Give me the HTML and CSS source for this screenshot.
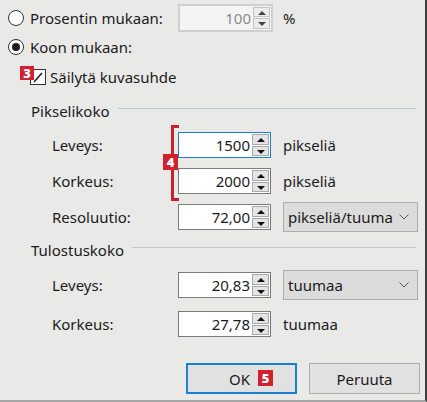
FILE: index.html
```html
<!DOCTYPE html>
<html>
<head>
<meta charset="utf-8">
<link rel="stylesheet" href="styles.css">
</head>
<body>
<div class="dialog">
  <div class="row row-top">
    <label class="opt">
      <span class="radio"></span>
      <span>Prosentin mukaan:</span>
    </label>
    <div class="spin disabled"><span class="val">100</span><span class="arrows"><span class="up"></span><span class="down"></span></span></div>
    <span class="unit">%</span>
  </div>
  <div class="row row-size">
    <label class="opt">
      <span class="radio checked"></span>
      <span>Koon mukaan:</span>
    </label>
  </div>
  <div class="row row-check">
    <span class="check-wrap">
      <span class="badge b3">3</span>
      <span class="check"><svg width="12" height="12" viewBox="0 0 12 12"><path d="M2 11 L10 2" stroke="#222" stroke-width="1.6" fill="none"/></svg></span>
    </span>
    <span>Säilytä kuvasuhde</span>
  </div>

  <div class="group">
    <div class="legend"><span>Pikselikoko</span><span class="rule"></span></div>
    <div class="fields">
      <div class="bracket"></div>
      <span class="badge b4">4</span>
      <div class="row field">
        <span class="lbl">Leveys:</span>
        <div class="spin focus"><span class="val">1500</span><span class="arrows"><span class="up"></span><span class="down"></span></span></div>
        <span class="unit">pikseliä</span>
      </div>
      <div class="row field">
        <span class="lbl">Korkeus:</span>
        <div class="spin"><span class="val">2000</span><span class="arrows"><span class="up"></span><span class="down"></span></span></div>
        <span class="unit">pikseliä</span>
      </div>
      <div class="row field">
        <span class="lbl">Resoluutio:</span>
        <div class="spin"><span class="val">72,00</span><span class="arrows"><span class="up"></span><span class="down"></span></span></div>
        <div class="select"><span>pikseliä/tuuma</span><svg width="10" height="6" viewBox="0 0 10 6"><path d="M0.5 0.5 L5 5 L9.5 0.5" stroke="#555" fill="none"/></svg></div>
      </div>
    </div>
  </div>

  <div class="group group2">
    <div class="legend"><span>Tulostuskoko</span><span class="rule"></span></div>
    <div class="row field f2">
      <span class="lbl">Leveys:</span>
      <div class="spin"><span class="val">20,83</span><span class="arrows"><span class="up"></span><span class="down"></span></span></div>
      <div class="select"><span>tuumaa</span><svg width="10" height="6" viewBox="0 0 10 6"><path d="M0.5 0.5 L5 5 L9.5 0.5" stroke="#555" fill="none"/></svg></div>
    </div>
    <div class="row field f3">
      <span class="lbl">Korkeus:</span>
      <div class="spin"><span class="val">27,78</span><span class="arrows"><span class="up"></span><span class="down"></span></span></div>
      <span class="unit">tuumaa</span>
    </div>
  </div>

  <div class="buttons">
    <button class="btn ok"><span>OK</span><span class="badge b5">5</span></button>
    <button class="btn">Peruuta</button>
  </div>
</div>
</body>
</html>
```
FILE: styles.css
```css
html, body {
  margin: 0;
  padding: 0;
}
body {
  width: 427px;
  height: 402px;
  background: #e9e9e7;
  font-family: "Noto Sans", "Open Sans", sans-serif;
  font-size: 15px;
  color: #1b1b1b;
  overflow: hidden;
}
.dialog {
  width: 425px;
  height: 400px;
  border-right: 2px solid #3c3c3c;
  border-bottom: 2px solid #a6a6a6;
  position: relative;
}
.row {
  display: flex;
  align-items: center;
}
.row-top { height: 35px; }
.row-size { height: 24px; }
.row-check { height: 36px; padding-left: 30px; gap: 4px; }
.opt {
  display: flex;
  align-items: center;
  gap: 6px;
  padding-left: 8px;
  width: 170px;
}
.radio {
  width: 14px;
  height: 14px;
  border: 1px solid #333;
  border-radius: 50%;
  background: #fff;
  box-sizing: content-box;
  position: relative;
}
.radio.checked::after {
  content: "";
  position: absolute;
  left: 3px;
  top: 3px;
  width: 8px;
  height: 8px;
  border-radius: 50%;
  background: #1b1b1b;
}
.spin {
  width: 93px;
  height: 26px;
  border: 1px solid #7a7a7a;
  background: #fff;
  display: flex;
  align-items: stretch;
  justify-content: flex-end;
  box-sizing: border-box;
  padding: 1px;
}
.spin.focus { border-color: #1a7fd0; }
.spin.disabled {
  border-color: #cfcfcf;
  background: #f4f4f4;
  color: #8a8a8a;
  height: 28px;
  width: 95px;
  border-width: 2px;
}
.spin .val {
  flex: 1;
  text-align: right;
  padding-right: 2px;
  line-height: 22px;
}
.arrows {
  width: 17px;
  display: flex;
  flex-direction: column;
  gap: 1px;
}
.arrows span {
  flex: 1;
  background: #e4e4e4;
  border: 1px solid #a9a9a9;
  position: relative;
}
.arrows .up::after, .arrows .down::after {
  content: "";
  position: absolute;
  left: 4px;
  width: 0;
  height: 0;
  border-left: 4px solid transparent;
  border-right: 4px solid transparent;
}
.arrows .up::after { top: 3px; border-bottom: 4px solid #111; }
.arrows .down::after { top: 3px; border-top: 4px solid #111; }
.disabled .arrows span { background: #ececec; border-color: #c4c4c4; }
.disabled .arrows .up::after { border-bottom-color: #444; }
.disabled .arrows .down::after { border-top-color: #444; }
.unit { margin-left: 12px; }
.row-top .unit { margin-left: 10px; }
.check-wrap {
  position: relative;
  display: inline-flex;
}
.check {
  width: 14px;
  height: 14px;
  border: 1px solid #333;
  background: #fff;
  display: flex;
  align-items: center;
  justify-content: center;
}
.badge {
  position: absolute;
  background: #d2202f;
  color: #fff;
  font-family: "Open Sans", "Noto Sans", sans-serif;
  font-weight: 800;
  font-size: 13px;
  width: 15px;
  height: 16px;
  line-height: 16px;
  text-align: center;
}
.b3 { left: -10px; top: -3px; width: 14px; height: 14px; line-height: 14px; }
.group { position: relative; }
.legend {
  height: 32px;
  display: flex;
  align-items: center;
  padding-left: 31px;
  gap: 8px;
}
.rule {
  flex: 1;
  height: 1px;
  background: #b7cad3;
  margin-right: 9px;
  margin-top: -5px;
}
.fields { position: relative; }
.field { height: 36px; }
.lbl {
  width: 126px;
  padding-left: 52px;
}
.bracket {
  position: absolute;
  left: 171px;
  top: -2px;
  width: 5px;
  height: 70px;
  border: 3px solid #c8202f;
  border-right: none;
}
.b4 { left: 163px; top: 27px; }
.group2 .legend { height: 30px; }
.f2 { height: 40px; }
.f3 { height: 38px; }
.select {
  margin-left: 12px;
  width: 135px;
  height: 30px;
  box-sizing: border-box;
  border: 1px solid #adadad;
  background: #dcdcdc;
  display: flex;
  align-items: center;
  justify-content: space-between;
  padding: 0 8px 0 4px;
}
.buttons {
  display: flex;
  gap: 12px;
  padding-left: 186px;
  margin-top: 20px;
}
.btn {
  width: 111px;
  height: 31px;
  box-sizing: border-box;
  background: #e1e1e1;
  border: 1px solid #adadad;
  font-family: inherit;
  font-size: 15px;
  color: #1b1b1b;
  padding: 0;
  position: relative;
}
.btn.ok {
  border: 2px solid #1a7fd0;
}
.btn.ok span:first-child { margin-left: -4px; }
.b5 { left: 70px; top: 5px; width: 15px; height: 16px; }
```
